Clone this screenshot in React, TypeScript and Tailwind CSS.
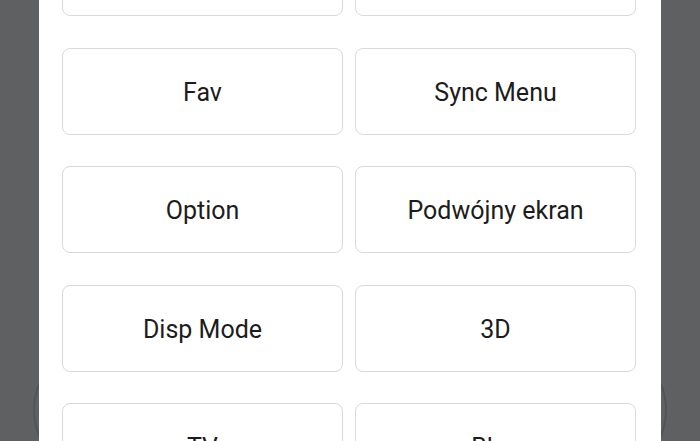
const rows: string[][] = [
  ["", ""],
  ["Fav", "Sync Menu"],
  ["Option", "Podwójny ekran"],
  ["Disp Mode", "3D"],
  ["TV", "Blue"],
];

export default function App() {
  return (
    <div className="relative flex h-[441px] w-[700px] overflow-hidden bg-[#5f6062] font-['Roboto',sans-serif]">
      {/* dimmed remote controls behind the sheet */}
      <div className="absolute left-[33px] top-[345px] h-[130px] w-[130px] rounded-full border-2 border-[#535456]" />
      <div className="absolute right-[33px] top-[345px] h-[130px] w-[130px] rounded-full border-2 border-[#535456]" />

      <div className="relative mx-[39px] flex h-full flex-1 flex-col overflow-hidden bg-white pl-[23px] pr-[25px]">
        <div className="-mt-[71px] flex flex-col gap-[31.5px]">
          {rows.map((row, i) => (
            <div key={i} className="grid grid-cols-2 gap-3">
              {row.map((label, j) => (
                <button
                  key={j}
                  className="flex h-[87px] items-center justify-center rounded-lg border border-[#d9d9d9] bg-white pt-[3px] text-[25px] text-[#1c1c1c]"
                >
                  {label}
                </button>
              ))}
            </div>
          ))}
        </div>
      </div>
    </div>
  );
}
